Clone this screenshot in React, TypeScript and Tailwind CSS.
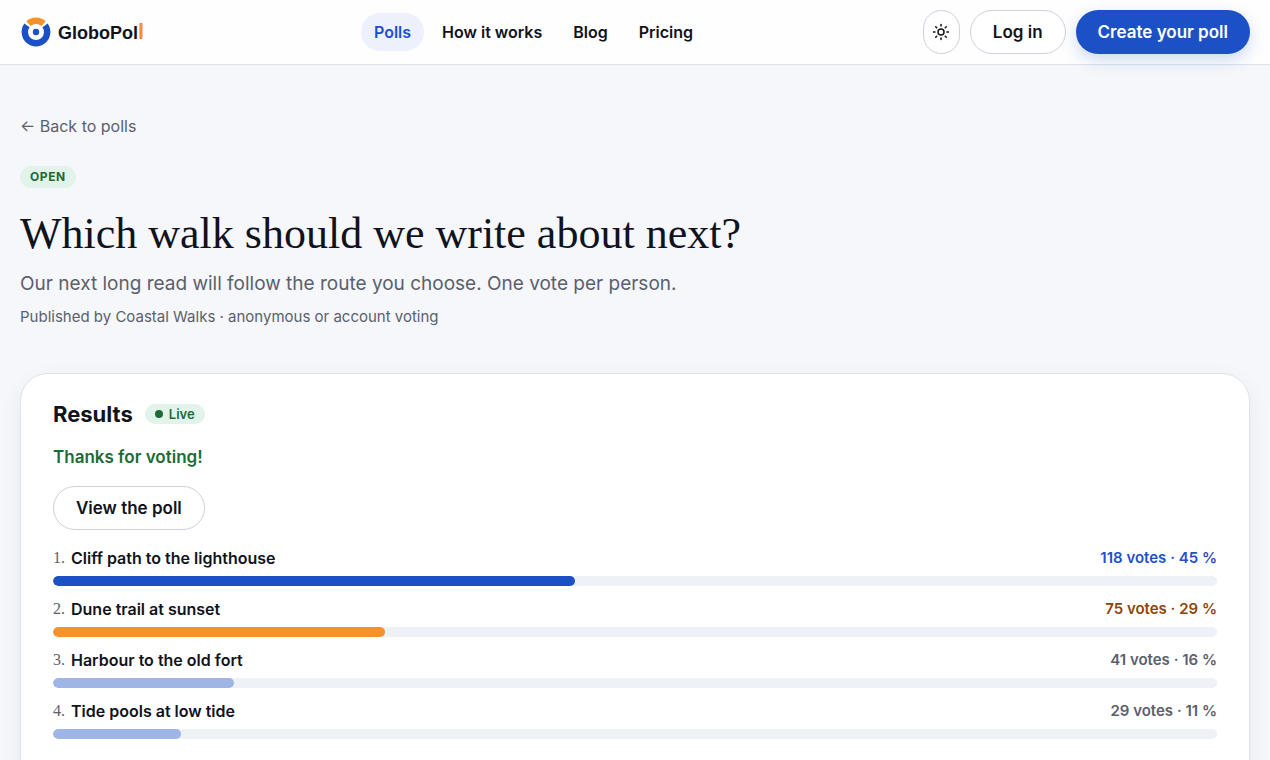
import React from 'react';
import { Sun } from 'lucide-react';

interface PollOption {
  label: string;
  votes: number;
  barClass: string;
  votesClass: string;
}

const options: PollOption[] = [
  { label: 'Cliff path to the lighthouse', votes: 118, barClass: 'bg-[#1b51c5]', votesClass: 'text-[#1f4fcb]' },
  { label: 'Dune trail at sunset', votes: 75, barClass: 'bg-[#f5922a]', votesClass: 'text-[#8c450c]' },
  { label: 'Harbour to the old fort', votes: 41, barClass: 'bg-[#9fb5e6]', votesClass: 'text-[#5b606c]' },
  { label: 'Tide pools at low tide', votes: 29, barClass: 'bg-[#9fb5e6]', votesClass: 'text-[#5b606c]' },
];

const totalVotes = options.reduce((sum, option) => sum + option.votes, 0);

const navItems = ['Polls', 'How it works', 'Blog', 'Pricing'];

const Logo: React.FC = () => (
  <a href="#" className="flex items-center gap-1.5">
    <svg width="32" height="32" viewBox="0 0 32 32" fill="none" aria-hidden="true">
      <path d="M6.94 9.42A11.2 11.2 0 1 0 25.06 9.42" stroke="#1b51c5" strokeWidth="6.4" />
      <path d="M8.5 7.7A11.2 11.2 0 0 1 23.5 7.7" stroke="#f5922a" strokeWidth="6.4" />
      <circle cx="16" cy="16" r="3.2" fill="#1b51c5" />
    </svg>
    <span className="flex items-baseline font-['Liberation_Sans',Arial,sans-serif] text-lg leading-6 font-bold text-[#11131c]">
      GloboPol
      <span className="text-[22px] leading-6 text-[#f5922a]">l</span>
    </span>
  </a>
);

const Header: React.FC = () => (
  <header className="border-b border-[#dfe2ea] bg-[#fefefe]">
    <div className="flex h-16 items-center justify-between px-5">
      <Logo />
      <nav className="flex items-center gap-[5px]">
        {navItems.map((item) => (
          <a
            key={item}
            href="#"
            className={
              item === 'Polls'
                ? 'rounded-full bg-[#edf1fd] px-[13px] py-2 text-base leading-[22px] font-semibold text-[#1f4fcb]'
                : 'rounded-full px-[13px] py-2 text-base leading-[22px] font-semibold text-[#11131c]'
            }
          >
            {item}
          </a>
        ))}
      </nav>
      <div className="flex items-center gap-2.5">
        <button
          type="button"
          aria-label="Toggle theme"
          className="flex h-11 w-[37px] items-center justify-center rounded-full border border-[#cfd0de] bg-white"
        >
          <Sun size={18} />
        </button>
        <button
          type="button"
          className="h-11 rounded-full border border-[#cfd0de] bg-white px-[22px] text-[17px] leading-6 font-semibold"
        >
          Log in
        </button>
        <button
          type="button"
          className="h-11 rounded-full bg-[#1b51c5] px-[22px] text-[17px] leading-6 font-semibold text-white shadow-[0_6px_16px_rgba(27,81,197,0.22)]"
        >
          Create your poll
        </button>
      </div>
    </div>
  </header>
);

const ResultRow: React.FC<{ option: PollOption; rank: number }> = ({ option, rank }) => {
  const share = (option.votes / totalVotes) * 100;

  return (
    <li>
      <div className="flex items-center justify-between leading-[26px] font-semibold">
        <span className="flex items-center gap-1.5">
          <span className="font-['Liberation_Serif',serif] text-base leading-[26px] font-normal text-[#5b606c]">
            {rank}.
          </span>
          {option.label}
        </span>
        <span className={`text-[15px] ${option.votesClass}`}>
          {option.votes} votes · {Math.round(share)} %
        </span>
      </div>
      <div className="mt-[5px] h-2.5 overflow-hidden rounded-full bg-[#eef1f6]">
        <div className={`h-full rounded-full ${option.barClass}`} style={{ width: `${share}%` }} />
      </div>
    </li>
  );
};

const App: React.FC = () => (
  <div className="min-h-screen bg-[#f5f7fb] font-[Inter,sans-serif] text-[#11131c]">
    <Header />
    <main className="px-5 pt-12 pb-16">
      <a href="#" className="inline-block text-base leading-[26px] text-[#5b606c]">
        ← Back to polls
      </a>
      <div className="mt-6">
        <span className="inline-block rounded-full bg-[#e2f4e9] px-2.5 text-xs leading-[22px] font-bold tracking-wider text-[#1c6b38]">
          OPEN
        </span>
      </div>
      <h1 className="mt-4 font-['Liberation_Serif',serif] text-[44px] leading-[60px]">
        Which walk should we write about next?
      </h1>
      <p className="mt-1.5 text-[19px] leading-[27px] text-[#5b606c]">
        Our next long read will follow the route you choose. One vote per person.
      </p>
      <p className="mt-2 text-[15px] leading-6 text-[#5b606c]">
        Published by Coastal Walks · anonymous or account voting
      </p>

      <section className="mt-11 rounded-[28px] border border-[#dfe2ea] bg-white px-8 pt-6 pb-16 shadow-[0_8px_24px_rgba(17,19,50,0.06)]">
        <div className="flex items-center gap-3">
          <h2 className="text-[22px] leading-8 font-bold">Results</h2>
          <span className="flex items-center gap-1.5 rounded-full bg-[#e2f4e9] px-2.5 text-[13px] leading-5 font-semibold text-[#1c6b38]">
            <span className="size-2 rounded-full bg-[#1c6b38]" />
            Live
          </span>
        </div>
        <p className="mt-3.5 text-[17px] leading-[26px] font-semibold text-[#1c6b38]">Thanks for voting!</p>
        <button
          type="button"
          className="mt-4 h-11 rounded-full border border-[#cfd0de] bg-white px-[22px] text-[17px] leading-6 font-semibold"
        >
          View the poll
        </button>
        <ol className="mt-[15px] flex flex-col gap-2.5">
          {options.map((option, index) => (
            <ResultRow key={option.label} option={option} rank={index + 1} />
          ))}
        </ol>
      </section>
    </main>
  </div>
);

export default App;
